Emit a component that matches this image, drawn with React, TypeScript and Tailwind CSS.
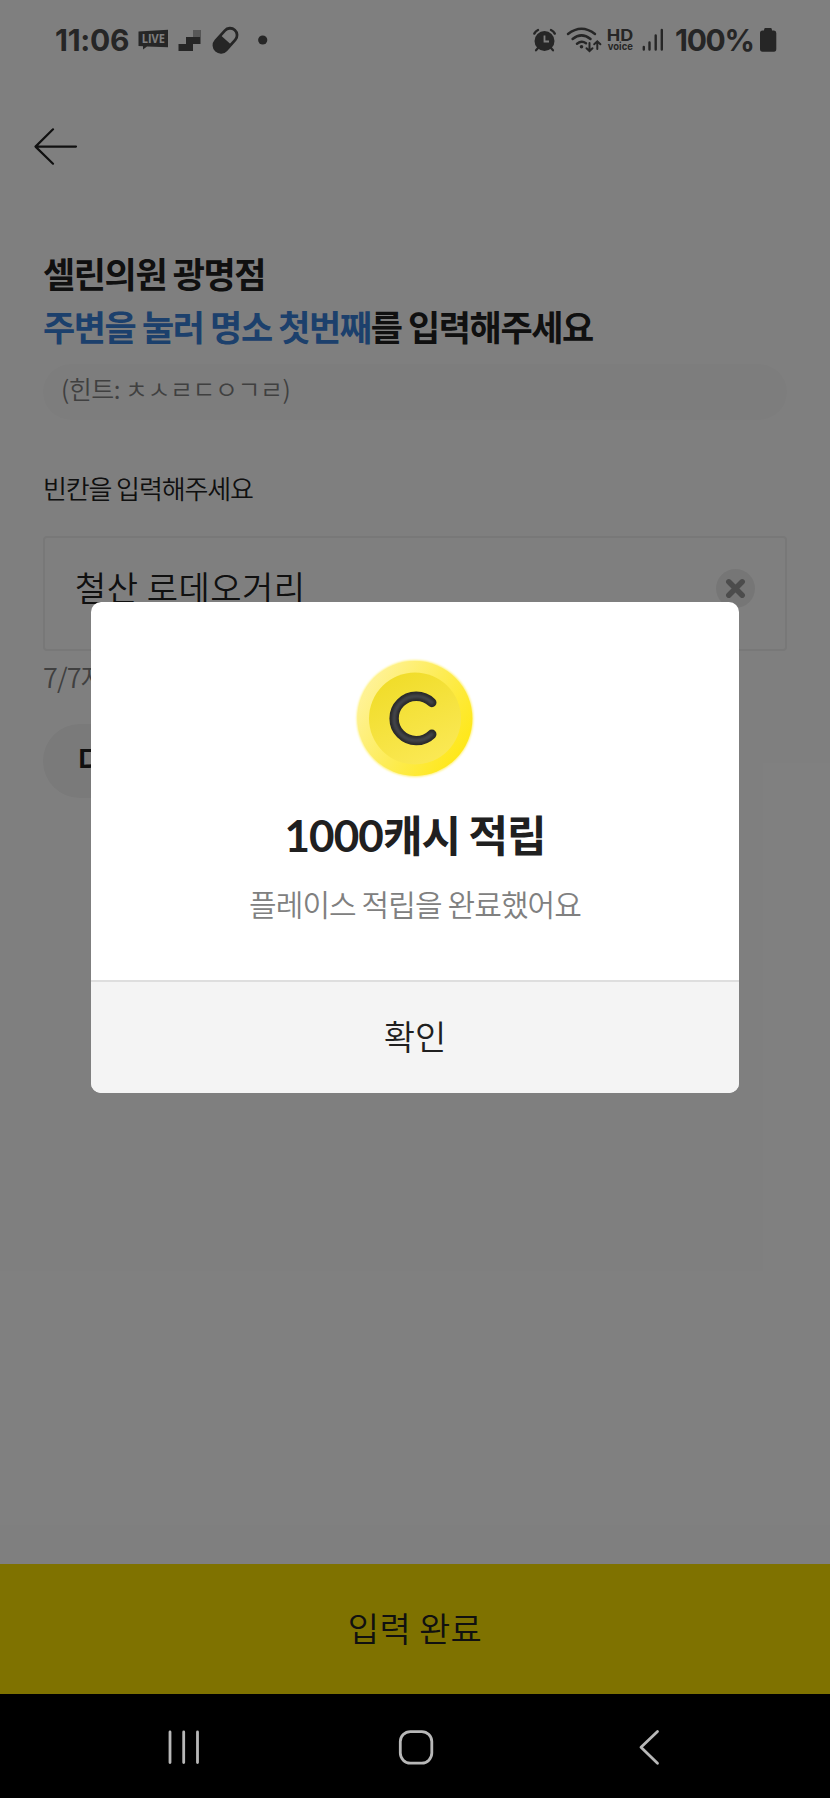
import { useState } from "react";

// iconos de la barra de estado (izquierda)
function StatusLeft() {
  return (
    <div className="flex items-center">
      <span className="w-[76px] pl-px font-['Inter'] text-[30px] leading-none font-bold tracking-[-0.3px]">11:06</span>
      <svg width="140" height="40" viewBox="130 20 140 40" fill="currentColor">
        <path d="M138.5 31.5 L168 29.7 V47.3 L147 46.5 L143 49.5 V46.2 L138.5 46 Z" strokeLinejoin="round" />
        <text x="141.8" y="43" fontSize="12.2" fontWeight="700" fontFamily="Open Sans, sans-serif" textLength="23" lengthAdjust="spacingAndGlyphs" fill="#fff">LIVE</text>
        <path d="M178.5 44 H186 V37 H193 V30 H200.5 V44 H193 V51 H178.5 Z" />
        <path d="M193 30 H200.5 V37 H193 Z" fill="#b0b0b0" />
        <g transform="rotate(-48 225.5 40.3)">
          <rect x="211.7" y="33.3" width="27.6" height="14" rx="7" fill="none" stroke="currentColor" strokeWidth="2.8" />
          <path d="M226 33 H219 A7.3 7.3 0 0 0 219 47.6 H226 Z" />
        </g>
        <circle cx="262.7" cy="40" r="4.6" />
      </svg>
    </div>
  );
}

// iconos de la barra de estado (derecha)
function StatusRight() {
  return (
    <div className="flex items-center">
      <svg width="140" height="40" viewBox="530 20 140 40" fill="none" stroke="currentColor" strokeLinecap="round">
        <circle cx="544.5" cy="41" r="10" fill="currentColor" stroke="none" />
        <path d="M544.5 35.5 V41.5 H549" stroke="#fff" strokeWidth="1.8" strokeLinecap="butt" />
        <path d="M534.3 33.6 Q535.5 31.2 538 30 M551 30 Q553.6 31.2 554.8 33.6" strokeWidth="2.4" />
        <path d="M538 48 L536 50.3 M551 48 L553 50.3" strokeWidth="2.2" />
        <path d="M568 34 Q581.5 23.5 595 34 M572.6 39 Q581.5 31.8 590.5 39 M577 43.7 Q581.5 40.2 586 43.2" strokeWidth="2.5" />
        <circle cx="581.5" cy="46.8" r="1.8" fill="currentColor" stroke="none" />
        <path d="M589.5 43 V51 M586.5 48.2 L589.5 51.2 L592.5 48.2 M597.3 49 V41.5 M594.2 44.3 L597.3 41.3 L600.4 44.3" strokeWidth="2" />
        <g fill="currentColor" stroke="none" fontFamily="Inter, sans-serif" fontWeight="700">
          <text x="606.8" y="41.3" fontSize="16" textLength="26.5" lengthAdjust="spacingAndGlyphs">HD</text>
          <text x="607.8" y="49.8" fontSize="10" textLength="25" lengthAdjust="spacingAndGlyphs">voice</text>
        </g>
        <path d="M643.8 47 V49.5 M649.5 42.5 V49.5 M655.7 35.5 V49.5 M661.8 30 V49.5" strokeWidth="2.4" />
      </svg>
      <span className="w-[89px] pl-[5px] font-['Inter'] text-[30px] leading-none font-bold tracking-[-1.3px]">100%</span>
      <svg width="18" height="40" viewBox="759 20 18 40" fill="currentColor">
        <path d="M765 28 H771 Q772 28 772 30.5 H774 Q776.3 30.5 776.3 33 V49 Q776.3 51.7 774 51.7 H762.5 Q760 51.7 760 49 V33 Q760 30.5 762.5 30.5 H764 Q764 28 765 28 Z" />
      </svg>
    </div>
  );
}

function Coin() {
  return (
    <svg className="mx-auto mt-[55px] block shrink-0" width="124" height="124" viewBox="0 0 124 124">
      <defs>
        <linearGradient id="rim" x1="0" y1="0.2" x2="1" y2="0.8">
          <stop offset="0" stopColor="#fff3a0" />
          <stop offset="0.5" stopColor="#fdec55" />
          <stop offset="1" stopColor="#ffe70f" />
        </linearGradient>
        <linearGradient id="face" x1="0.25" y1="0" x2="0.75" y2="1">
          <stop offset="0" stopColor="#f0dc28" />
          <stop offset="1" stopColor="#fbe956" />
        </linearGradient>
        <filter id="glow" x="-10%" y="-10%" width="120%" height="120%">
          <feGaussianBlur stdDeviation="1" />
        </filter>
      </defs>
      <circle cx="62" cy="61.5" r="58.2" fill="#fff06a" filter="url(#glow)" />
      <circle cx="62" cy="61.5" r="57.4" fill="url(#rim)" />
      <circle cx="62" cy="61.5" r="46" fill="url(#face)" />
      <path d="M78.8 45.5 A22.2 22.2 0 1 0 78.8 77.3" fill="none" stroke="#2b2b2b" strokeWidth="9.4" strokeLinecap="round" />
      <path d="M78.8 45.5 A22.2 22.2 0 1 0 78.8 77.3" fill="none" stroke="#43444a" strokeWidth="4" strokeLinecap="round" filter="url(#glow)" />
    </svg>
  );
}

export default function App() {
  // estados locales
  const [answer, setAnswer] = useState("철산 로데오거리");
  const [open, setOpen] = useState(true);

  return (
    <main className="relative flex h-[1798px] w-[830px] flex-col overflow-hidden bg-white font-['Noto_Sans_CJK_KR',sans-serif] text-[#202020]">
      <header className="flex h-[80px] shrink-0 items-center justify-between pr-[53px] pl-[54px] text-[#4c4c4c]">
        <StatusLeft />
        <StatusRight />
      </header>

      <section className="flex flex-1 flex-col px-[43px]">
        <button className="mt-[46px] -ml-[9px] w-11" aria-label="뒤로">
          <svg width="44" height="40" viewBox="34 126 44 40" fill="none" stroke="currentColor" strokeWidth="2.2" strokeLinecap="round" strokeLinejoin="round">
            <path d="M76 146.6 H35.5 M53 129.3 L35.5 146.6 L53 163.7" />
          </svg>
        </button>

        <h1 className="mt-[80px] text-[35px] leading-[53px] font-bold tracking-[-0.04em] whitespace-nowrap">
          셀린의원 광명점
          <br />
          <span className="text-[#3880d8]">주변을 눌러 명소 첫번째</span>를 입력해주세요
        </h1>
        <p className="mt-3 flex h-14 items-center rounded-full bg-[#fbfbfb] pb-[6px] pl-[18px] text-[25px] font-[350] tracking-[-0.02em] text-[#808080]">
          (힌트: ㅊㅅㄹㄷㅇㄱㄹ)
        </p>

        <label htmlFor="answer" className="mt-[49px] text-[26px] leading-[38px] font-[350] tracking-[-0.043em]">빈칸을 입력해주세요</label>
        <div className="mt-[29px] flex h-[115px] shrink-0 items-center justify-between rounded border-2 border-[#f0f0f0] pr-[30px] pl-[30px]">
          <input
            id="answer"
            value={answer}
            onChange={(e) => setAnswer(e.target.value)}
            className="mb-[14px] w-[500px] text-[34px] leading-[50px] font-[350] tracking-[0.015em] outline-none"
          />
          <button onClick={() => setAnswer("")} className="mb-[11px]" aria-label="지우기">
            <svg width="39" height="39" viewBox="0 0 39 39">
              <circle cx="19.5" cy="19.5" r="19.5" fill="#ededed" />
              <path d="M12.8 12.8 L26.2 26.2 M26.2 12.8 L12.8 26.2" stroke="#989898" strokeWidth="5.5" strokeLinecap="round" />
            </svg>
          </button>
        </div>
        <p className="mt-[6px] text-[27px] leading-[40px] font-[350] tracking-[-0.03em] text-[#808080]">7/7자</p>
        <button className="mt-[27px] h-[74px] w-[220px] rounded-full bg-[#f4f4f4] pb-[3px] pl-[35px] text-left text-[29px] font-bold">다시 입력</button>
      </section>

      <button className="h-[130px] shrink-0 bg-[#ffe400] pb-[2px] text-[34px] leading-[50px] font-[350] tracking-[0.01em]">입력 완료</button>

      <nav className="h-[104px] shrink-0 bg-black">
        <svg width="830" height="104" viewBox="0 1694 830 104" fill="none" stroke="#b8b8b8" strokeWidth="2.8" strokeLinecap="round" strokeLinejoin="round">
          <path d="M170 1732 V1762.5 M183.7 1732 V1762.5 M197.5 1732 V1762.5" />
          <rect x="400.3" y="1731.6" width="31.5" height="31.5" rx="10" />
          <path d="M657.5 1731.5 L641 1747.3 L657.5 1763.2" />
        </svg>
      </nav>

      {open && (
        <div className="absolute inset-x-0 top-0 flex h-[1694px] justify-center bg-black/50">
          <div className="mt-[602px] flex h-[491px] w-[648px] flex-col overflow-hidden rounded-[10px] bg-white text-center">
            <Coin />
            <h2 className="mt-[21px] h-[62px] text-[43px] leading-[62px] font-bold tracking-[-0.025em] text-[#202020]">
              <span className="font-['Lato'] text-[44px] tracking-[-0.9px]">1000</span>캐시 적립
            </h2>
            <p className="mt-[17px] text-[30px] leading-[44px] font-[350] tracking-[-0.03em] text-[#808080]">플레이스 적립을 완료했어요</p>
            <button
              onClick={() => setOpen(false)}
              className="mt-auto h-[113px] border-t-2 border-[#dedede] bg-[#f4f4f4] pb-[3px] text-[34px] leading-[50px] font-[350] text-[#202020]"
            >
              확인
            </button>
          </div>
        </div>
      )}
    </main>
  );
}
